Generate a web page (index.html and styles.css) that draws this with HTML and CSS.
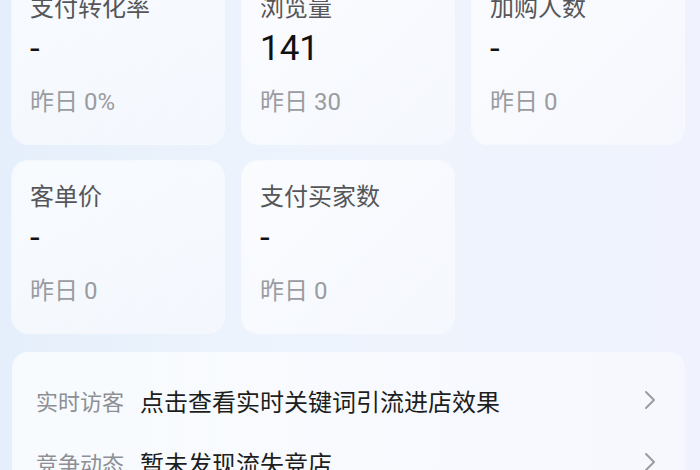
FILE: index.html
```html
<!DOCTYPE html>
<html lang="zh-CN">
<head>
<meta charset="utf-8">
<link rel="stylesheet" href="styles.css">
</head>
<body>
<div class="page">
  <div class="grid">
    <div class="card">
      <div class="title">支付转化率</div>
      <div class="value">-</div>
      <div class="sub">昨日 0%</div>
    </div>
    <div class="card">
      <div class="title">浏览量</div>
      <div class="value">141</div>
      <div class="sub">昨日 30</div>
    </div>
    <div class="card">
      <div class="title">加购人数</div>
      <div class="value">-</div>
      <div class="sub">昨日 0</div>
    </div>
    <div class="card">
      <div class="title">客单价</div>
      <div class="value">-</div>
      <div class="sub">昨日 0</div>
    </div>
    <div class="card">
      <div class="title">支付买家数</div>
      <div class="value">-</div>
      <div class="sub">昨日 0</div>
    </div>
  </div>
  <div class="list">
    <div class="row">
      <span class="label">实时访客</span>
      <span class="text">点击查看实时关键词引流进店效果</span>
      <svg class="chev" width="14" height="20" viewBox="0 0 14 20"><path d="M3 2 L11 10 L3 18" fill="none" stroke="#9a9ca3" stroke-width="2" stroke-linecap="round" stroke-linejoin="round"/></svg>
    </div>
    <div class="row">
      <span class="label">竞争动态</span>
      <span class="text">暂未发现流失竞店</span>
      <svg class="chev" width="14" height="20" viewBox="0 0 14 20"><path d="M3 2 L11 10 L3 18" fill="none" stroke="#9a9ca3" stroke-width="2" stroke-linecap="round" stroke-linejoin="round"/></svg>
    </div>
  </div>
</div>
</body>
</html>
```
FILE: styles.css
```css
html, body {
  margin: 0;
  padding: 0;
}
body {
  width: 700px;
  height: 470px;
  overflow: hidden;
  background: linear-gradient(90deg, #e5effb 0%, #edf3fc 35%, #f0f3fd 100%);
  font-family: Roboto, "Noto Sans CJK SC", sans-serif;
}
.page {
  padding-left: 12px;
  margin-top: -28px;
}
.grid {
  display: grid;
  grid-template-columns: repeat(3, 212px);
  column-gap: 18px;
  row-gap: 17px;
}
.card {
  height: 172px;
  box-sizing: border-box;
  padding: 20px 18px 0 18px;
  border-radius: 16px;
  background: linear-gradient(135deg, rgba(255,255,255,0.72), rgba(250,251,255,0.55));
  box-shadow: 0 0 0 1px rgba(255,255,255,0.5);
}
.title {
  font-size: 24px;
  line-height: 32px;
  color: #555659;
}
.value {
  margin-top: 5px;
  font-size: 35px;
  line-height: 40px;
  color: #111;
  font-weight: 400;
}
.sub {
  margin-top: 18px;
  font-size: 24px;
  line-height: 30px;
  color: #9b9ca0;
}
.list {
  margin-top: 19px;
  width: 673px;
  box-sizing: border-box;
  padding: 17px 28px 0 24px;
  border-radius: 16px;
  background: linear-gradient(90deg, rgba(255,255,255,0.72), rgba(250,251,255,0.6));
  height: 150px;
}
.row {
  display: flex;
  align-items: center;
  height: 62px;
}
.label {
  font-size: 22px;
  color: #8d8f94;
  width: 104px;
}
.text {
  flex: 1;
  font-size: 24px;
  color: #1d1e20;
}
.chev {
  display: block;
}
```
